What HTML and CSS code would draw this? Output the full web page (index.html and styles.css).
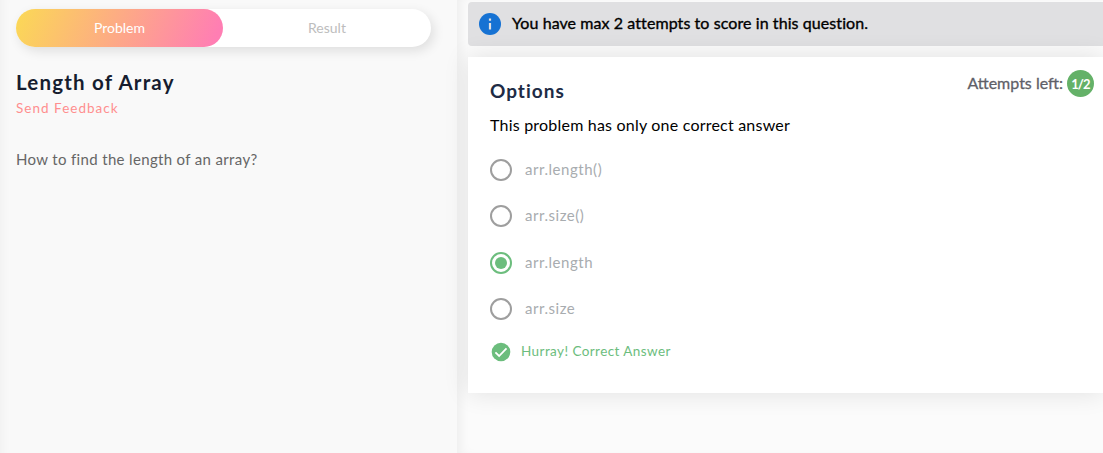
FILE: index.html
```html
<!DOCTYPE html>
<html lang="en">
<head>
<meta charset="utf-8">
<title>Length of Array</title>
<link rel="stylesheet" href="styles.css">
</head>
<body>
<div class="page">
  <section class="problem">
    <nav class="tabs">
      <a class="tab active"><span>Problem</span></a>
      <a class="tab"><span>Result</span></a>
    </nav>
    <h1 class="title"><span>Length of Array</span></h1>
    <a class="feedback"><span>Send Feedback</span></a>
    <p class="statement"><span>How to find the length of an array?</span></p>
  </section>
  <main class="answer">
    <div class="notice">
      <svg class="info-icon" viewBox="0 0 24 24"><circle cx="12" cy="12" r="11" fill="#1672d3"/><path fill="#e0e0e2" d="M10.9 10.9h2.2v6.6h-2.2zM10.9 6.5h2.2v2.2h-2.2z"/></svg>
      <span class="notice-text">You have max 2 attempts to score in this question.</span>
    </div>
    <section class="card">
      <div class="attempts"><span class="attempts-label">Attempts left:</span><span class="badge">1/2</span></div>
      <h2 class="options-title"><span>Options</span></h2>
      <p class="hint"><span>This problem has only one correct answer</span></p>
      <ul class="options">
        <li class="option"><i class="radio"></i><span class="label">arr.length()</span></li>
        <li class="option"><i class="radio"></i><span class="label">arr.size()</span></li>
        <li class="option"><i class="radio checked"></i><span class="label">arr.length</span></li>
        <li class="option"><i class="radio"></i><span class="label">arr.size</span></li>
      </ul>
      <div class="result">
        <svg class="check-icon" viewBox="0 0 22 22"><circle cx="11" cy="11" r="9.3" fill="#6cbd7d"/><path d="M5.4 11.4l3.7 3.6 7.4-7.7" fill="none" stroke="#fff" stroke-width="1.8"/></svg>
        <span class="result-text">Hurray! Correct Answer</span>
      </div>
    </section>
  </main>
</div>
</body>
</html>
```
FILE: styles.css
```css
* { box-sizing: border-box; }
body {
  margin: 0;
  height: 453px;
  overflow: hidden;
  background: #fbfbfb;
  font-family: Muli, Lato, sans-serif;
}
h1, h2, p, ul { margin: 0; padding: 0; }
.page { display: flex; height: 453px; }
.problem {
  flex: 0 0 457px;
  padding: 9px 16px 0;
  background: #f9f9f9;
  box-shadow: inset 12px 0 12px -10px rgba(0, 0, 0, .04);
}
.tabs {
  display: flex;
  width: 415px;
  height: 38px;
  border-radius: 19px;
  background: #fff;
  box-shadow: 3px 4px 12px rgba(0, 0, 0, .11);
}
.tab {
  flex: 1;
  border-radius: 19px;
  line-height: 38px;
  text-align: center;
  font-size: 14px;
  color: #bdbdbd;
}
.tab.active {
  flex: 0 0 207px;
  color: #fff;
  background: linear-gradient(112deg, #fbd955, #ff7eb3 95%);
}
.title {
  margin-top: 21px;
  font-size: 20.5px;
  line-height: 28px;
  font-weight: 700;
  letter-spacing: 1.2px;
  color: #161d2f;
}
.feedback {
  display: block;
  font-size: 13.5px;
  line-height: 24px;
  letter-spacing: 1.02px;
  color: #ff8f8f;
}
.statement {
  margin-top: 27px;
  font-size: 15px;
  line-height: 24px;
  letter-spacing: .34px;
  color: #666;
}
.answer {
  flex: 0 0 646px;
  padding: 2px 0 0 11px;
  background: #fbfbfb;
  box-shadow: inset 8px 0 12px -5px rgba(0, 0, 0, .06);
}
.notice {
  display: flex;
  align-items: center;
  height: 44px;
  padding-left: 10px;
  border-radius: 4px 0 0 4px;
  background: #e0e0e2;
}
.info-icon { width: 24px; height: 24px; }
.notice-text {
  margin-left: 10px;
  padding-bottom: 3px;
  font-size: 16px;
  letter-spacing: .08px;
  -webkit-text-stroke: .35px #000;
  color: #000;
}
.card {
  position: relative;
  height: 336px;
  margin-top: 11px;
  padding: 20px 0 0 22px;
  background: #fff;
  box-shadow: 0 0 24px rgba(0, 0, 0, .11);
}
.attempts {
  position: absolute;
  top: 13px;
  right: 9px;
  display: flex;
  align-items: center;
  font-size: 16px;
  color: #5f5f68;
}
.attempts-label {
  padding-bottom: 3px;
  -webkit-text-stroke: .3px #5f5f68;
}
.badge {
  width: 27px;
  height: 27px;
  margin-left: 4px;
  border-radius: 50%;
  line-height: 28px;
  text-align: center;
  font-size: 13px;
  font-weight: 700;
  letter-spacing: -.8px;
  color: #fff;
  background: #64b168;
}
.options-title {
  font-size: 19px;
  line-height: 28px;
  font-weight: 700;
  letter-spacing: 1px;
  color: #202b45;
}
.hint {
  margin-top: 8px;
  font-size: 16px;
  line-height: 24px;
  letter-spacing: .21px;
  color: #000;
}
.options {
  display: grid;
  grid-template-rows: repeat(4, 22px);
  row-gap: 24.33px;
  margin-top: 22px;
  list-style: none;
}
.option { display: flex; align-items: center; }
.radio {
  display: grid;
  place-items: center;
  width: 22px;
  height: 22px;
  border: 2px solid #9e9e9e;
  border-radius: 50%;
}
.radio.checked { border-color: #6cbd7d; }
.radio.checked::after {
  content: "";
  width: 12px;
  height: 12px;
  border-radius: 50%;
  background: #6cbd7d;
}
.label {
  margin-left: 13px;
  padding-bottom: 2px;
  font-size: 15px;
  line-height: 22px;
  letter-spacing: .54px;
  color: #a8acaf;
}
.result {
  display: flex;
  align-items: center;
  margin-top: 21px;
  height: 22px;
  color: #6cbd7d;
}
.check-icon { width: 22px; height: 22px; }
.result-text {
  margin-left: 9px;
  padding-bottom: 2px;
  font-size: 13.5px;
  letter-spacing: .42px;
}
```
